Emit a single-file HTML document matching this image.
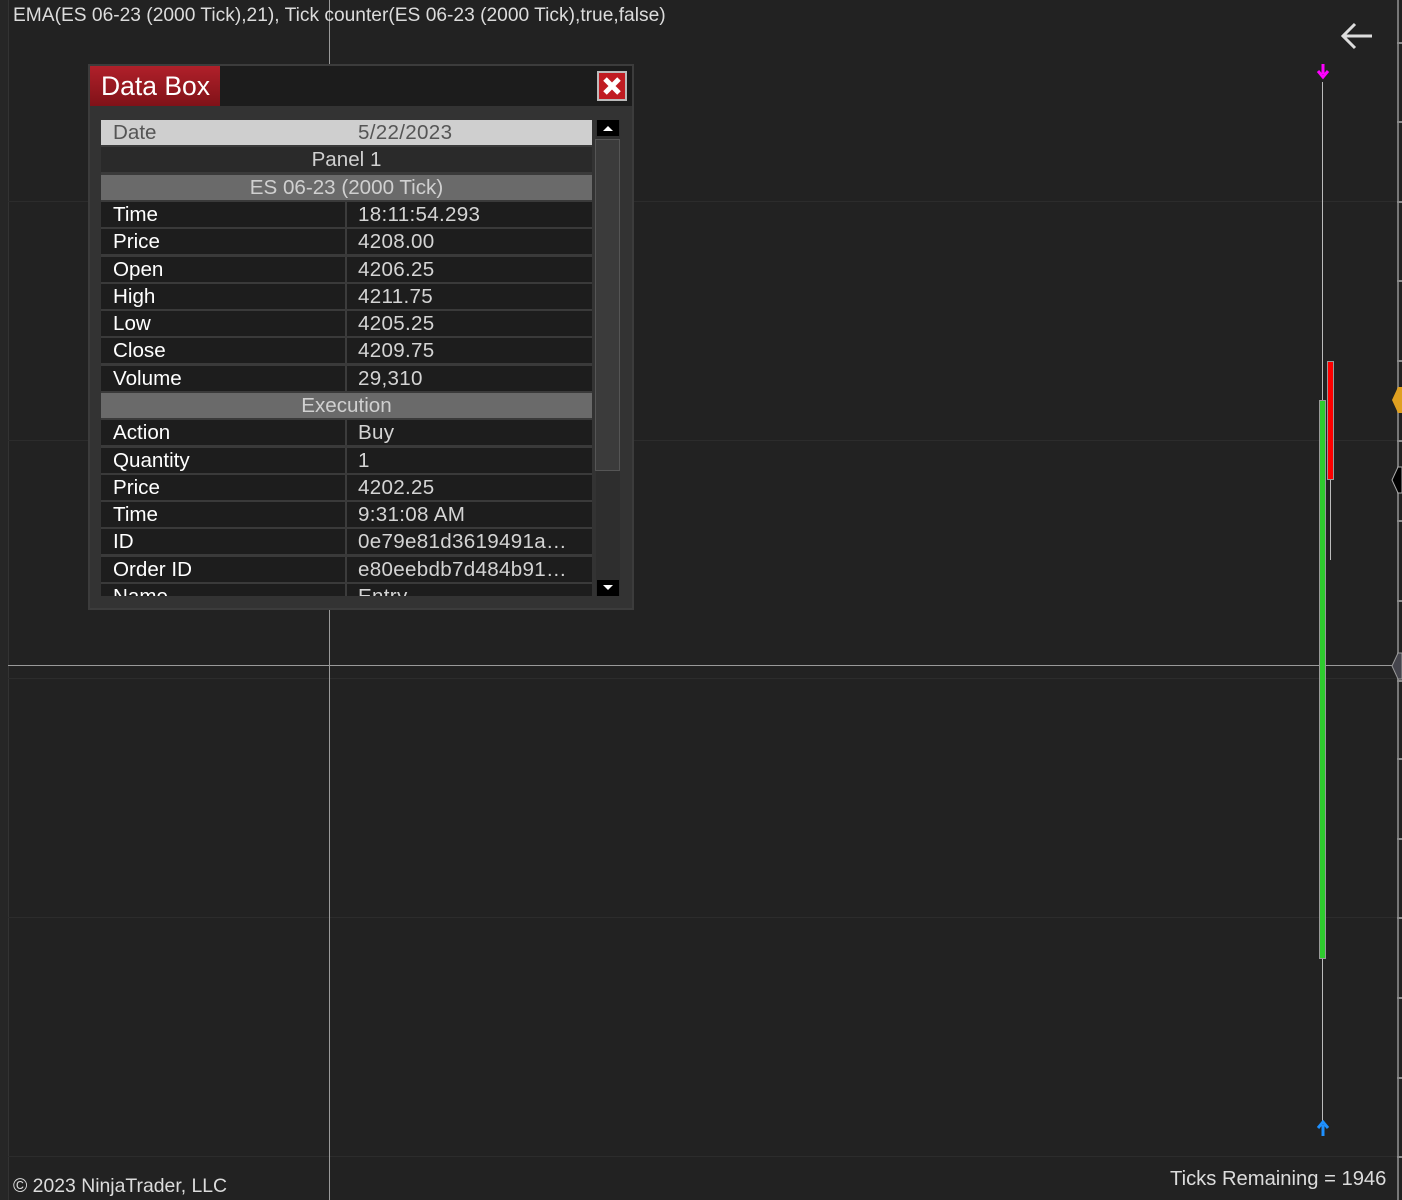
<!DOCTYPE html>
<html><head><style>
*{margin:0;padding:0;box-sizing:border-box}
body{width:1402px;height:1200px;background:#222222;position:relative;overflow:hidden;font-family:"Liberation Sans",Arial,sans-serif;color:#d8d8d8}
.a{position:absolute}
.hl{position:absolute;left:8px;width:1390px;height:1px;background:#2c2c2c}
.tk{position:absolute;left:1397px;width:5px;height:2px;background:#8a8a8a}
.row{position:absolute;left:101px;width:491px;height:25px;background:#1d1d1d;font-size:20.6px;line-height:25px}
.row .l{position:absolute;left:12px;color:#fff}
.row .v{position:absolute;left:257px;color:#d4d4d4;white-space:nowrap;letter-spacing:0.3px}
.row .s{position:absolute;left:244px;top:0;width:2px;height:25px;background:#3c3c3c}
.h{text-align:center;color:#d0d0d0}
</style></head><body>
<div class="a" style="left:0;top:0;width:8px;height:1200px;background:#262626"></div>
<div class="a" style="left:8px;top:0;width:1px;height:1200px;background:#333"></div>
<div class="hl" style="top:201px"></div>
<div class="hl" style="top:440px"></div>
<div class="hl" style="top:678px"></div>
<div class="hl" style="top:917px"></div>
<div class="hl" style="top:1156px"></div>
<div class="a" style="left:8px;top:665px;width:1390px;height:1px;background:#9a9a9a"></div>
<div class="a" style="left:329px;top:0;width:1px;height:1200px;background:#9a9a9a"></div>
<div class="a" style="left:1397px;top:0;width:2px;height:1200px;background:#777"></div>
<div class="tk" style="top:42px"></div><div class="tk" style="top:121px"></div><div class="tk" style="top:201px"></div><div class="tk" style="top:280px"></div><div class="tk" style="top:360px"></div><div class="tk" style="top:440px"></div><div class="tk" style="top:520px"></div><div class="tk" style="top:600px"></div><div class="tk" style="top:680px"></div><div class="tk" style="top:758px"></div><div class="tk" style="top:838px"></div><div class="tk" style="top:917px"></div><div class="tk" style="top:997px"></div><div class="tk" style="top:1077px"></div><div class="tk" style="top:1156px"></div>
<svg class="a" style="left:1388px;top:384px" width="14" height="300">
<polygon points="4,16 10,3 14,3 14,29 10,29" fill="#e0a020"/>
<polygon points="4,96 10,83 14,83 14,109 10,109" fill="#000" stroke="#aaa" stroke-width="1"/>
<polygon points="4,282 10,269 14,269 14,295 10,295" fill="#45454d" stroke="#999" stroke-width="1"/>
</svg>
<div class="a" style="left:1322px;top:82px;width:1px;height:1040px;background:#bbb"></div>
<div class="a" style="left:1330px;top:478px;width:1px;height:82px;background:#bbb"></div>
<div class="a" style="left:1319px;top:400px;width:7px;height:559px;background:#2ecc2e;border:1px solid #999"></div>
<div class="a" style="left:1327px;top:361px;width:7px;height:119px;background:#f00;border:1px solid #999"></div>
<svg class="a" style="left:1316px;top:64px" width="14" height="16"><path d="M7 0V10M2 7L7 13L12 7" stroke="#ff00ff" stroke-width="3" fill="none"/></svg>
<svg class="a" style="left:1316px;top:1120px" width="14" height="16"><path d="M7 16V5M2 8L7 2L12 8" stroke="#1e90ff" stroke-width="3" fill="none"/></svg>
<svg class="a" style="left:1338px;top:20px" width="38" height="32"><path d="M34 16H5M17 4L5 16L17 28" stroke="#ddd" stroke-width="3" fill="none"/></svg>
<div class="a" style="left:13px;top:5px;font-size:19.2px;color:#dcdcdc;white-space:nowrap">EMA(ES 06-23 (2000 Tick),21), Tick counter(ES 06-23 (2000 Tick),true,false)</div>
<div class="a" style="left:13px;top:1175px;font-size:19.4px;color:#dcdcdc">© 2023 NinjaTrader, LLC</div>
<div class="a" style="left:1170px;top:1168px;font-size:20.2px;color:#dcdcdc">Ticks Remaining = 1946</div>

<div class="a" style="left:88px;top:64px;width:546px;height:546px;background:#333;border:2px solid #3c3c3c"></div>
<div class="a" style="left:90px;top:66px;width:542px;height:40px;background:#1c1c1c"></div>
<div class="a" style="left:90px;top:66px;width:130px;height:40px;background:linear-gradient(#b0202a,#801218);color:#fff;font-size:26.5px;line-height:40px;padding-left:11px">Data Box</div>
<div class="a" style="left:597px;top:71px;width:30px;height:30px;background:#c01c22;border:2px solid #bbb"></div>
<svg class="a" style="left:599px;top:73px" width="26" height="26"><path d="M6 6L20 20M20 6L6 20" stroke="#fff" stroke-width="5"/></svg>
<div class="a" style="left:101px;top:120px;width:491px;height:476px;background:#3a3a3a;overflow:hidden">
</div>
<div class="row" style="top:120px;background:#cfcfcf"><span class="l" style="color:#555">Date</span><span class="v" style="color:#555">5/22/2023</span></div>
<div class="row h" style="top:147px;background:#2a2a2a">Panel 1</div>
<div class="row h" style="top:175px;background:#6a6a6a">ES 06-23 (2000 Tick)</div>
<div class="row" style="top:202px"><span class="l">Time</span><span class="s"></span><span class="v">18:11:54.293</span></div>
<div class="row" style="top:229px"><span class="l">Price</span><span class="s"></span><span class="v">4208.00</span></div>
<div class="row" style="top:257px"><span class="l">Open</span><span class="s"></span><span class="v">4206.25</span></div>
<div class="row" style="top:284px"><span class="l">High</span><span class="s"></span><span class="v">4211.75</span></div>
<div class="row" style="top:311px"><span class="l">Low</span><span class="s"></span><span class="v">4205.25</span></div>
<div class="row" style="top:338px"><span class="l">Close</span><span class="s"></span><span class="v">4209.75</span></div>
<div class="row" style="top:366px"><span class="l">Volume</span><span class="s"></span><span class="v">29,310</span></div>
<div class="row h" style="top:393px;background:#6a6a6a">Execution</div>
<div class="row" style="top:420px"><span class="l">Action</span><span class="s"></span><span class="v">Buy</span></div>
<div class="row" style="top:448px"><span class="l">Quantity</span><span class="s"></span><span class="v">1</span></div>
<div class="row" style="top:475px"><span class="l">Price</span><span class="s"></span><span class="v">4202.25</span></div>
<div class="row" style="top:502px"><span class="l">Time</span><span class="s"></span><span class="v">9:31:08 AM</span></div>
<div class="row" style="top:529px"><span class="l">ID</span><span class="s"></span><span class="v">0e79e81d3619491a…</span></div>
<div class="row" style="top:557px"><span class="l">Order ID</span><span class="s"></span><span class="v">e80eebdb7d484b91…</span></div>
<div class="a" style="left:101px;top:584px;width:491px;height:12px;overflow:hidden"><div class="row" style="top:0;left:0"><span class="l">Name</span><span class="s"></span><span class="v">Entry</span></div></div>
<div class="a" style="left:596px;top:120px;width:24px;height:476px;background:#2e2e2e"></div>
<div class="a" style="left:597px;top:120px;width:22px;height:16px;background:#000"></div>
<svg class="a" style="left:597px;top:120px" width="22" height="16"><path d="M6 11L11 6L16 11Z" fill="#fff"/></svg>
<div class="a" style="left:595px;top:139px;width:25px;height:332px;background:#3b3b3b;border:1px solid #555"></div>
<div class="a" style="left:597px;top:580px;width:22px;height:16px;background:#000"></div>
<svg class="a" style="left:597px;top:580px" width="22" height="16"><path d="M6 5L11 10L16 5Z" fill="#fff"/></svg>
</body></html>
